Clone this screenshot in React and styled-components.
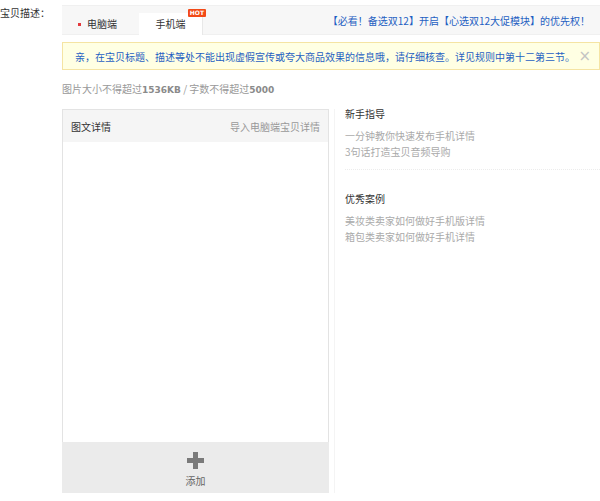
import React from "react";
import styled, { createGlobalStyle } from "styled-components";

const GlobalStyle = createGlobalStyle`
  html, body {
    margin: 0;
    padding: 0;
    background: #fff;
    font-family: "Noto Sans CJK SC", "Noto Sans", sans-serif;
    font-size: 10px;
    color: #333;
  }
`;

const Page = styled.div`
  width: 600px;
  height: 501px;
  display: flex;
  overflow: hidden;
`;

const Label = styled.div`
  width: 62px;
  flex-shrink: 0;
  padding-top: 5px;
  font-size: 10px;
  line-height: 16px;
  color: #333;
`;

const Main = styled.div`
  flex: 1;
  padding-top: 5px;
  display: flex;
  flex-direction: column;
`;

const TabBar = styled.div`
  height: 30px;
  background: #f7f7f7;
  border-top: 1px solid #f0f0f0;
  border-bottom: 1px solid #f0f0f0;
  display: flex;
  align-items: flex-end;
  padding-left: 4px;
  box-sizing: border-box;
`;

const Tab = styled.div`
  position: relative;
  width: 64px;
  height: 22px;
  line-height: 22px;
  margin-bottom: -1px;
  text-align: center;
  font-size: 10px;
  color: #333;
  background: ${(p) => (p.$active ? "#fff" : "transparent")};
  border-right: ${(p) => (p.$active ? "1px solid #e8e8e8" : "1px solid transparent")};
  box-sizing: border-box;
  margin-right: ${(p) => (p.$active ? "0" : "9px")};
`;

const Dot = styled.span`
  display: inline-block;
  width: 3px;
  height: 3px;
  background: #e4393c;
  margin-right: 6px;
  vertical-align: middle;
  position: relative;
  top: -1px;
`;

const Hot = styled.span`
  position: absolute;
  top: -4px;
  right: -4px;
  height: 8px;
  padding: 0 2px;
  background: #f24a18;
  color: #fff;
  font-family: "DejaVu Sans", sans-serif;
  font-size: 6px;
  font-weight: bold;
  line-height: 8px;
  border-radius: 1px;
`;

const PromoLink = styled.a`
  margin-left: auto;
  align-self: center;
  margin-right: 10px;
  color: #1f5fc2;
  font-size: 10px;
  text-decoration: none;
`;

const Notice = styled.div`
  margin-top: 7px;
  height: 28px;
  background: #ffffe3;
  border: 1px solid #f5e4a3;
  box-sizing: border-box;
  display: flex;
  align-items: center;
  padding: 0 8px 0 12px;
  color: #1f5fc2;
  font-size: 10px;
  white-space: nowrap;
`;

const Close = styled.span`
  margin-left: auto;
  color: #c4c4c4;
  font-size: 15px;
  font-family: "DejaVu Sans", sans-serif;
`;

const Hint = styled.div`
  margin-top: 11px;
  color: #999;
  font-size: 10px;
  line-height: 16px;
  b {
    font-family: "DejaVu Sans", sans-serif;
    font-size: 9px;
    font-weight: bold;
    color: #8a8a8a;
  }
`;

const Workspace = styled.div`
  margin-top: 11px;
  display: flex;
`;

const Phone = styled.div`
  width: 267px;
  height: 384px;
  display: flex;
  flex-direction: column;
  border: 1px solid #e3e3e3;
  border-bottom: none;
  box-sizing: border-box;
`;

const PhoneHead = styled.div`
  height: 32px;
  background: #f5f5f5;
  display: flex;
  align-items: center;
  justify-content: space-between;
  padding: 0 8px 0 8px;
  font-size: 10px;
  color: #333;
`;

const Import = styled.span`
  color: #999;
`;

const PhoneBody = styled.div`
  flex: 1;
  background: #fff;
`;

const AddArea = styled.div`
  height: 51px;
  margin: 0 -1px;
  background: #ebebeb;
  display: flex;
  flex-direction: column;
  align-items: center;
  padding-top: 10px;
  box-sizing: border-box;
  color: #666;
  font-size: 10px;
  line-height: 12px;
`;

const Plus = styled.svg`
  display: block;
  margin-bottom: 6px;
`;

const Side = styled.div`
  flex: 1;
  margin-left: 5px;
  border-left: 1px solid #f4f4f4;
  padding-left: 10px;
`;

const Section = styled.div`
  padding-top: ${(p) => (p.$first ? "0" : "24px")};
  padding-bottom: 9px;
  border-bottom: ${(p) => (p.$divider ? "1px dotted #ececec" : "none")};
`;

const SectionTitle = styled.div`
  font-size: 10px;
  line-height: 10px;
  color: #333;
  margin-bottom: 9px;
`;

const SectionLine = styled.div`
  font-size: 10px;
  line-height: 16px;
  color: #aaa;
`;

export default function App() {
  return (
    <>
      <GlobalStyle />
      <Page>
        <Label>宝贝描述：</Label>
        <Main>
          <TabBar>
            <Tab>
              <Dot />
              电脑端
            </Tab>
            <Tab $active>
              手机端
              <Hot>HOT</Hot>
            </Tab>
            <PromoLink>【必看！备选双12】开启【心选双12大促模块】的优先权！</PromoLink>
          </TabBar>
          <Notice>
            亲，在宝贝标题、描述等处不能出现虚假宣传或夸大商品效果的信息哦，请仔细核查。详见规则中第十二第三节。
            <Close>×</Close>
          </Notice>
          <Hint>
            图片大小不得超过<b>1536KB</b> / 字数不得超过<b>5000</b>
          </Hint>
          <Workspace>
            <Phone>
              <PhoneHead>
                <span>图文详情</span>
                <Import>导入电脑端宝贝详情</Import>
              </PhoneHead>
              <PhoneBody />
              <AddArea>
                <Plus width="17" height="17" viewBox="0 0 17 17">
                  <path d="M6 0h5v6h6v5h-6v6H6v-6H0V6h6z" fill="#7a7a7a" />
                </Plus>
                添加
              </AddArea>
            </Phone>
            <Side>
              <Section $first $divider>
                <SectionTitle>新手指导</SectionTitle>
                <SectionLine>一分钟教你快速发布手机详情</SectionLine>
                <SectionLine>3句话打造宝贝音频导购</SectionLine>
              </Section>
              <Section>
                <SectionTitle>优秀案例</SectionTitle>
                <SectionLine>美妆类卖家如何做好手机版详情</SectionLine>
                <SectionLine>箱包类卖家如何做好手机详情</SectionLine>
              </Section>
            </Side>
          </Workspace>
        </Main>
      </Page>
    </>
  );
}
